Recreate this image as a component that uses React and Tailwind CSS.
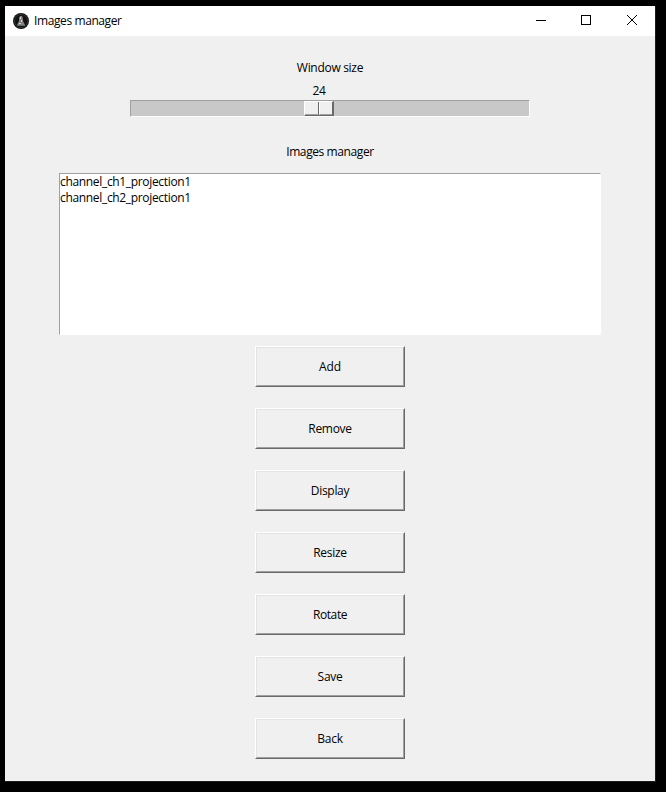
const actions = [
  { label: "Add", spacing: "tracking-[-0.1px]" },
  { label: "Remove", spacing: "tracking-[-0.3px]" },
  { label: "Display", spacing: "tracking-[-0.3px]" },
  { label: "Resize", spacing: "tracking-[-0.3px]" },
  { label: "Rotate", spacing: "tracking-[-0.4px]" },
  { label: "Save", spacing: "tracking-[-0.3px]" },
  { label: "Back", spacing: "tracking-[-0.2px]" },
];

const images = ["channel_ch1_projection1", "channel_ch2_projection1"];

function AppIcon() {
  return (
    <svg width="16" height="16" viewBox="0 0 16 16" className="shrink-0">
      <circle cx="8" cy="8" r="8" fill="#101314" />
      <circle cx="8" cy="8" r="6.6" fill="none" stroke="#343939" strokeWidth="0.8" />
      <path d="M7 3h2l1 2v3l1 2 1 2H4l1-2 1-2V5z" fill="#7f8585" />
      <path d="M7 4h1v2H7zM8 7h1v2H8zM6 10h2v1H6z" fill="#d4d7d5" />
      <path d="M9 5h1v1H9zM7 9h1v1H7z" fill="#a34b47" />
      <path d="M4 12h8v1H5z" fill="#626767" />
    </svg>
  );
}

function TitleBar() {
  return (
    <header className="flex h-[30px] items-center bg-white pl-2">
      <AppIcon />
      <span className="ml-[5px] tracking-[-0.4px]">Images manager</span>
      <div className="ml-auto flex h-full">
        <button className="flex w-[44px] items-center justify-center" aria-label="Minimize">
          <svg width="10" height="10" shapeRendering="crispEdges">
            <path d="M0 4h10v1H0z" />
          </svg>
        </button>
        <button className="flex w-[46px] items-center justify-center pb-[2px]" aria-label="Maximize">
          <svg width="10" height="10" shapeRendering="crispEdges">
            <path d="M.5 .5h9v9h-9z" fill="none" stroke="black" />
          </svg>
        </button>
        <button className="flex w-[46px] items-center justify-center pb-[2px]" aria-label="Close">
          <svg width="10" height="10">
            <path d="M0 0L10 10M10 0L0 10" stroke="black" />
          </svg>
        </button>
      </div>
    </header>
  );
}

function Slider() {
  return (
    <div className="h-[17px] w-[400px] border border-t-[#a0a0a0] border-r-white border-b-white border-l-[#a0a0a0] bg-[#c8c8c8]">
      <div className="ml-[173px] flex h-[15px] w-[30px] border-t border-r-2 border-b border-l border-t-white border-r-[#696969] border-b-[#696969] border-l-white bg-[#f0f0f0]">
        <div className="w-[14px] border-r border-b border-r-[#696969] border-b-[#a0a0a0]" />
        <div className="flex-1 border-b border-l border-b-[#a0a0a0] border-l-white" />
      </div>
    </div>
  );
}

function RaisedButton({ label, spacing }) {
  return (
    <button className="h-[41px] w-[150px] border border-t-white border-r-[#696969] border-b-[#696969] border-l-white">
      <span className={"flex h-full items-center justify-center border border-t-[#e3e3e3] border-r-[#a0a0a0] border-b-[#a0a0a0] border-l-[#e3e3e3] " + spacing}>
        {label}
      </span>
    </button>
  );
}

export default function App() {
  return (
    <div className="h-[792px] w-[666px] bg-black pt-[6px] pl-[5px] font-['Open_Sans','Noto_Sans',sans-serif] text-[12px] leading-4 text-black">
      <div className="h-[776px] w-[651px] border-r border-b border-[#1c1c1e] bg-[#f0f0f0]">
        <TitleBar />
        <main className="flex flex-col items-center pt-[24px]">
          <div className="tracking-[-0.3px]">Window size</div>
          <div className="mt-[7px] mr-[22px] tracking-[-0.3px]">24</div>
          <div className="mt-[1px]">
            <Slider />
          </div>
          <div className="mt-[27px] tracking-[-0.4px]">Images manager</div>
          <ul className="mt-[13px] h-[162px] w-[542px] border border-t-[#a0a0a0] border-r-white border-b-white border-l-[#a0a0a0] bg-white tracking-[-0.33px]">
            {images.map((name) => (
              <li key={name} className="h-4">{name}</li>
            ))}
          </ul>
          <div className="mt-[11px] flex flex-col gap-[21px]">
            {actions.map((action) => (
              <RaisedButton key={action.label} {...action} />
            ))}
          </div>
        </main>
      </div>
    </div>
  );
}
